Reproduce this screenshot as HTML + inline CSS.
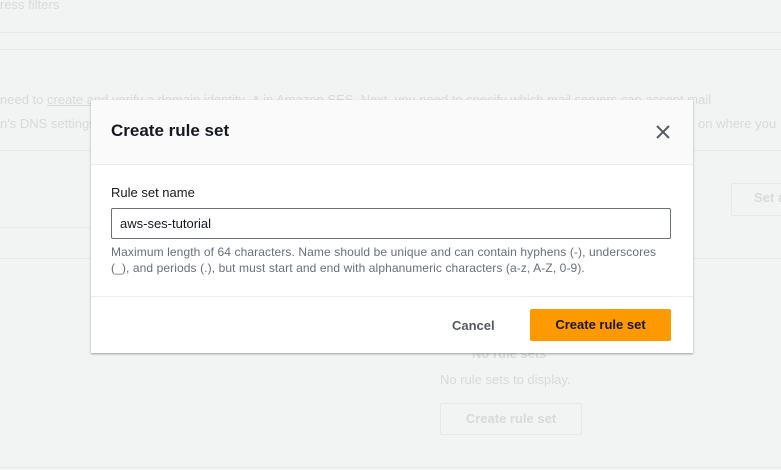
<!DOCTYPE html>
<html><head><style>
body{margin:0;width:781px;height:470px;background:#f2f3f3;font-family:"Liberation Sans",sans-serif;position:relative;overflow:hidden;color:#16191f}
.f{position:absolute;color:#d5dbdb;font-size:13px;white-space:nowrap}
.l{position:absolute;left:0;right:0;height:1px;background:#e3e8eb}
.modal{position:absolute;left:91px;top:100px;width:602px;height:253px;background:#fff;box-shadow:0 1px 2px rgba(0,0,0,.35)}
.hd{height:64px;background:#fafafa;border-bottom:1px solid #eaeded;position:relative}
.hd h2{margin:0;position:absolute;left:20px;top:21px;font-size:17px;font-weight:bold}
.x{position:absolute;right:23px;top:25px}
.lab{position:absolute;left:20px;top:85px;font-size:13px}
.in{position:absolute;left:20px;top:108px;width:560px;height:31px;border:1px solid #687078;border-radius:2px;box-sizing:border-box;font-size:13px;padding:7px 0 0 8px}
.hint{position:absolute;left:20px;top:144px;white-space:nowrap;font-size:12px;line-height:16px;color:#687078;letter-spacing:.1px}
.ft{position:absolute;left:0;right:0;top:196px;border-top:1px solid #eaeded}
.cancel{position:absolute;left:361px;top:218px;font-size:13px;font-weight:bold;color:#545b64}
.btn{position:absolute;left:439px;top:209px;width:141px;height:32px;background:#ff9900;border-radius:2px;font-size:13px;font-weight:bold;text-align:center;line-height:32px}
</style></head><body>
<div class="f" style="left:0;top:-3px">ress filters</div>
<div class="l" style="top:32px"></div>
<div class="l" style="top:49px"></div>
<div class="f" style="left:0;top:92px">need to <u>create and verify a domain identity</u> ↗ in Amazon SES. Next, you need to specify which mail servers can accept mail</div>
<div class="f" style="left:0;top:116px">n's DNS settings</div>
<div class="f" style="left:698px;top:116px">on where you</div>
<div class="l" style="top:150px"></div>
<div style="position:absolute;left:731px;top:183px;width:60px;height:31px;border:1px solid #e3e8eb;border-radius:2px"></div>
<div class="f" style="left:754px;top:190px;font-weight:bold">Set a</div>
<div class="l" style="top:227px;right:auto;width:100px"></div>
<div class="l" style="top:258px"></div>
<div class="f" style="left:472px;top:346px;font-weight:bold">No rule sets</div>
<div class="f" style="left:440px;top:372px">No rule sets to display.</div>
<div style="position:absolute;left:440px;top:403px;width:140px;height:30px;border:1px solid #e3e8eb;border-radius:2px;color:#d5dbdb;font-size:13px;font-weight:bold;text-align:center;line-height:30px">Create rule set</div>
<div class="l" style="top:467px"></div>
<div class="modal">
<div class="hd"><h2>Create rule set</h2>
<svg class="x" width="14" height="14" viewBox="0 0 14 14"><path d="M1 1L13 13M13 1L1 13" stroke="#545b64" stroke-width="2"/></svg></div>
<div class="lab">Rule set name</div>
<div class="in">aws-ses-tutorial</div>
<div class="hint">Maximum length of 64 characters. Name should be unique and can contain hyphens (-), underscores<br>(_), and periods (.), but must start and end with alphanumeric characters (a-z, A-Z, 0-9).</div>
<div class="ft"></div>
<div class="cancel">Cancel</div>
<div class="btn">Create rule set</div>
</div>
</body></html>
